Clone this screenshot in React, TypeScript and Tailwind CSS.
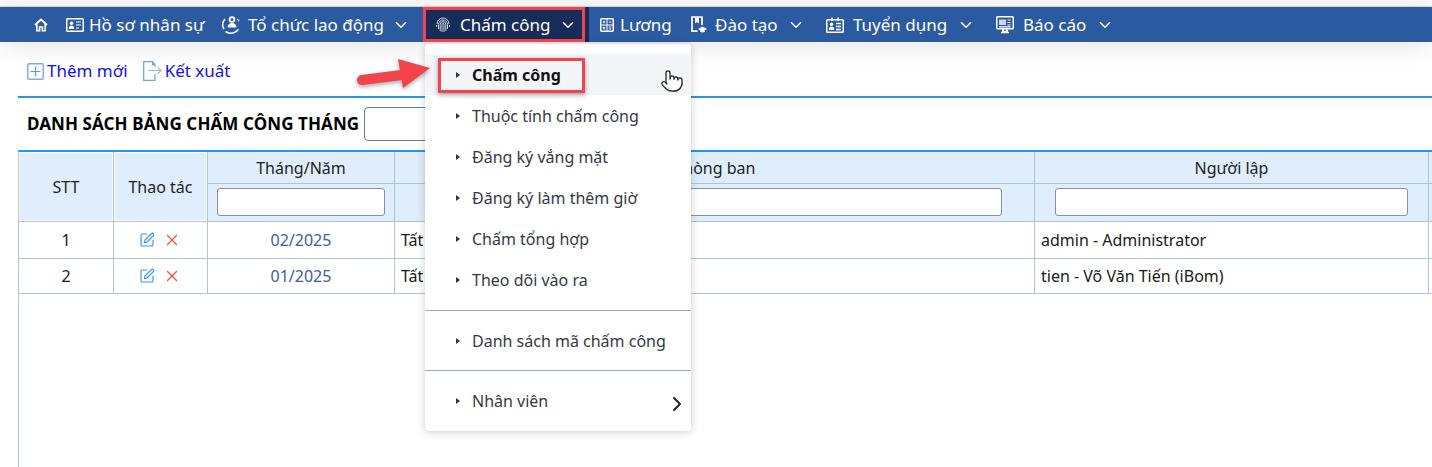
import React from "react";
import { ChevronDown, ChevronRight, Pointer, SquarePen, X } from "lucide-react";

const HomeIcon = () => (
  <svg width="16" height="16" viewBox="0 0 16 16" fill="none" stroke="#fff" strokeWidth="2">
    <path d="M2 8 8 2.5 14 8" strokeLinejoin="round" />
    <path d="M3.8 7v6.8h2.8V10h2.8v3.8h2.8V7" strokeWidth="1.6" />
  </svg>
);

const ProfileIcon = () => (
  <svg width="18" height="14" viewBox="0 0 18 14" fill="none" stroke="#fff">
    <rect x="0.75" y="0.75" width="16.5" height="12.5" rx="0.8" strokeWidth="1.5" />
    <circle cx="5.5" cy="5.3" r="1.8" fill="#fff" stroke="none" />
    <path d="M2.8 11c0-2.6 1.2-3.6 2.7-3.6S8.2 8.4 8.2 11z" fill="#fff" stroke="none" />
    <path d="M10 4h5M10 7h5M10 10h3" strokeWidth="1.2" />
  </svg>
);

const OrgIcon = () => (
  <svg width="20" height="20" viewBox="0 0 20 20" fill="none" stroke="#fff">
    <circle cx="11" cy="4.5" r="2.4" strokeWidth="1.8" />
    <path d="M6.5 12.5c0-3 2-4.5 4.5-4.5s4.5 1.5 4.5 4.5z" fill="#fff" stroke="none" />
    <path d="M4 4C1.500 7 1 11 3 14" strokeWidth="1.5" />
    <path d="M4.500 16.500c4 2.500 9 2 13-2" strokeWidth="1.5" />
    <path d="M16 4c.8.500 1.500 1.300 2 2.300" strokeWidth="1.3" />
  </svg>
);

const FingerprintIcon = () => (
  <svg width="16" height="16" viewBox="0 0 16 16" fill="none" stroke="#cfd4dd" strokeWidth="1">
    <path d="M2 7a6 6 0 0 1 12 0M1.500 10V8M14.500 10V8" />
    <path d="M3.500 12V7.500a4.500 4.500 0 0 1 9 0V12" />
    <path d="M5.200 14V7.500a2.800 2.800 0 0 1 5.600 0V14" />
    <path d="M7 15V7.500a1 1 0 0 1 2 0V15" />
  </svg>
);

const SalaryIcon = () => (
  <svg width="14" height="14" viewBox="0 0 14 14" fill="none" stroke="#fff">
    <rect x="0.75" y="0.75" width="12.5" height="12.5" rx="1" strokeWidth="1.5" />
    <path d="M1 7h12M7 1v12" strokeWidth="1" />
    <path d="M2.800 4h2.400M4 2.800v2.400M8.800 4h2.400M8.800 9h2.400M8.800 11h2.400M3 9l2 2M5 9l-2 2" strokeWidth="1.1" />
  </svg>
);

const TrainingIcon = () => (
  <svg width="17" height="18" viewBox="0 0 17 18" fill="none" stroke="#fff">
    <path d="M7.500 15.200H2V1h10v8" strokeWidth="1.7" />
    <path d="M5 1.500v6l2-1.500 2 1.500v-6z" fill="#fff" stroke="none" />
    <path d="M12.500 10.500 17 13l-4.500 2.500L8 13z" fill="#fff" stroke="none" />
    <path d="M10 15.500c1.500 1.300 3.500 1.300 5 0v-1.500l-2.500 1.500-2.500-1.500z" fill="#fff" stroke="none" />
  </svg>
);

const RecruitIcon = () => (
  <svg width="18" height="16" viewBox="0 0 18 16" fill="none" stroke="#fff">
    <rect x="0.75" y="2.75" width="16.5" height="12.5" rx="0.8" strokeWidth="1.5" />
    <path d="M6 .5V4M12 .5V4" strokeWidth="1.5" />
    <circle cx="5.5" cy="7.3" r="1.7" fill="#fff" stroke="none" />
    <path d="M2.800 13c0-2.500 1.200-3.400 2.700-3.400S8.200 10.500 8.200 13z" fill="#fff" stroke="none" />
    <path d="M10 6.500h5M10 9.500h5M10 12.500h5" strokeWidth="1.3" />
  </svg>
);

const ReportIcon = () => (
  <svg width="18" height="18" viewBox="0 0 18 18" fill="none" stroke="#fff">
    <rect x="0.75" y="0.75" width="16.5" height="12" rx="0.8" strokeWidth="1.5" />
    <path d="M3 3.500h7V9H3z" fill="#fff" fillOpacity="0.75" stroke="none" />
    <path d="M11.500 4h3M11.500 6.500h3M11.500 9h3M3 10.800h11.500" strokeWidth="1.2" />
    <path d="M7 13v2.500h4V13M5 16.500h8" strokeWidth="1.7" />
  </svg>
);

const PlusBoxIcon = () => (
  <svg width="17" height="17" viewBox="0 0 17 17" fill="none" stroke="#7fb3dd">
    <rect x="0.75" y="0.75" width="15.5" height="15.5" rx="1" strokeWidth="1.5" />
    <path d="M3.500 8.500h10M8.500 3.500v10" stroke="#5f9bd0" strokeWidth="1.2" />
  </svg>
);

const ExportIcon = () => (
  <svg width="19" height="20" viewBox="0 0 19 20" fill="none" stroke="#6fa6d6" strokeWidth="1.2">
    <path d="M12 6V3.500L9.500.7H.7v18.600H12V13" />
    <path d="M9.500.7v3H12" />
    <path d="M5 9.500h13M14.800 6.300l3.400 3.200-3.400 3.200" stroke="#8fbadd" />
  </svg>
);

interface NavItem {
  label: string;
  icon: React.ReactNode;
  hasMenu: boolean;
  className: string;
}

const NAV_ITEMS: NavItem[] = [
  { label: "Hồ sơ nhân sự", icon: <ProfileIcon />, hasMenu: false, className: "w-[137px] gap-[5px]" },
  { label: "Tổ chức lao động", icon: <OrgIcon />, hasMenu: true, className: "w-[221px] pl-[18px] gap-[7px]" },
];

const NAV_ITEMS_RIGHT: NavItem[] = [
  { label: "Lương", icon: <SalaryIcon />, hasMenu: false, className: "w-[90px] pl-[11px] gap-[6px]" },
  { label: "Đào tạo", icon: <TrainingIcon />, hasMenu: true, className: "w-[136px] pl-[11px] gap-[8px]" },
  { label: "Tuyển dụng", icon: <RecruitIcon />, hasMenu: true, className: "w-[170px] pl-[11px] gap-[9px]" },
  { label: "Báo cáo", icon: <ReportIcon />, hasMenu: true, className: "w-[130px] pl-[11px] gap-[9px]" },
];

const MENU_GROUPS = [
  { className: "", items: ["Chấm công", "Thuộc tính chấm công", "Đăng ký vắng mặt", "Đăng ký làm thêm giờ", "Chấm tổng hợp", "Theo dõi vào ra"] },
  { className: "mt-[10px] pt-[9px] border-t border-[#9aaac4]", items: ["Danh sách mã chấm công"] },
  { className: "mt-[9px] pt-[9px] border-t border-[#9aaac4]", items: ["Nhân viên"] },
];

const ROWS = [
  { id: 1, month: "02/2025", dept: "Tất cả", creator: "admin - Administrator", height: "h-[37px]" },
  { id: 2, month: "01/2025", dept: "Tất cả", creator: "tien - Võ Văn Tiến (iBom)", height: "h-[35px]" },
];

const headCell = "border-r border-b border-[#a9c4dc] bg-[#e0edfd] font-normal text-[#222]";
const bodyCell = "border-r border-b border-[#a9c4dc] text-[#1a1a1a]";
const filterCell = `${headCell} pb-[2px]`;
const filterInput = "block mx-auto w-[90%] h-[28px] bg-white border border-[#8d8d9c] rounded-[3px]";

const NavButton = ({ item }: { item: NavItem }) => (
  <div className={`flex items-center h-full shrink-0 whitespace-nowrap ${item.className}`}>
    <span className="shrink-0">{item.icon}</span>
    <span>{item.label}</span>
    {item.hasMenu && <ChevronDown size={18} strokeWidth={2} className="ml-[1px] shrink-0" />}
  </div>
);

const DropdownMenu = () => (
  <div className="absolute left-[425px] top-[44px] w-[266px] pt-[10px] pb-[10px] bg-white rounded-[4px] shadow-[0_1px_8px_rgba(0,0,0,0.2)] text-[#343944]">
    {MENU_GROUPS.map((group, g) => (
      <div key={g} className={group.className}>
        {group.items.map((label, i) => {
          const active = g === 0 && i === 0;
          return (
            <div
              key={label}
              className={`flex items-center h-[41px] pl-[31px] ${active ? "bg-[#f4f5f9] font-bold text-[#111]" : ""}`}
            >
              <span className="w-0 h-0 mr-[12px] border-y-[3.5px] border-y-transparent border-l-[4px] border-l-[#333]" />
              <span>{label}</span>
              {g === 2 && <ChevronRight size={24} strokeWidth={2} className="ml-auto mr-[2px] mt-[7px] text-[#222]" />}
            </div>
          );
        })}
      </div>
    ))}
  </div>
);

export default function App() {
  return (
    <div className="relative w-[1432px] h-[467px] overflow-hidden bg-white text-[16px] font-['Noto_Sans',sans-serif]">
      <div className="h-[7px] bg-[#f9f9f9] border-b border-[#d8d8d8]" />
      <nav className="relative flex items-center h-[35px] bg-[#2c5aa0] text-white text-[17px] shadow-[0_4px_24px_rgba(0,0,0,0.1)]">
        <div className="w-[66px] pl-[33px] shrink-0">
          <HomeIcon />
        </div>
        {NAV_ITEMS.map((item) => (
          <NavButton key={item.label} item={item} />
        ))}
        <div className="flex items-center w-[165px] h-full pl-[11px] shrink-0 whitespace-nowrap bg-[#172c58]">
          <FingerprintIcon />
          <span className="ml-[9px]">Chấm công</span>
          <ChevronDown size={18} strokeWidth={2} className="ml-[8px] shrink-0" />
        </div>
        {NAV_ITEMS_RIGHT.map((item) => (
          <NavButton key={item.label} item={item} />
        ))}
      </nav>

      <div className="flex items-center h-[54px] pt-[4px] pl-[27px] text-[17px] text-[#1212e6]">
        <PlusBoxIcon />
        <span className="ml-[3px]">Thêm mới</span>
        <span className="ml-[15px]">
          <ExportIcon />
        </span>
        <span className="ml-[3px]">Kết xuất</span>
      </div>

      <div className="ml-[18px] border-t-2 border-[#2196f3]">
        <div className="flex items-center gap-[5px] h-[52px] pl-[9px]">
          <h1 className="font-bold text-[17px] tracking-[0.1px] text-black whitespace-nowrap">DANH SÁCH BẢNG CHẤM CÔNG THÁNG</h1>
          <div className="w-[90px] h-[34px] border border-[#5b7bb0] rounded-[4px]" />
        </div>
      </div>

      <div className="ml-[18px] h-[317px] border-l border-t-2 border-l-[#a9c4dc] border-t-[#2196f3] overflow-hidden">
        <table className="table-fixed w-[1500px] border-separate border-spacing-0">
          <colgroup>
            <col className="w-[95px]" />
            <col className="w-[94px]" />
            <col className="w-[187px]" />
            <col className="w-[640px]" />
            <col className="w-[394px]" />
            <col />
          </colgroup>
          <thead>
            <tr className="h-[32px]">
              <th rowSpan={2} className={`${headCell} shadow-[inset_0_0_0_1px_#fff]`}>STT</th>
              <th rowSpan={2} className={`${headCell} shadow-[inset_0_0_0_1px_#fff]`}>Thao tác</th>
              <th className={headCell}>Tháng/Năm</th>
              <th className={headCell}>Phòng ban</th>
              <th className={headCell}>Người lập</th>
              <th className={headCell} />
            </tr>
            <tr className="h-[38px]">
              <th className={filterCell}><input className={filterInput} /></th>
              <th className={filterCell}><input className={filterInput} /></th>
              <th className={filterCell}><input className={filterInput} /></th>
              <th className={headCell} />
            </tr>
          </thead>
          <tbody>
            {ROWS.map((row) => (
              <tr key={row.id} className={row.height}>
                <td className={`${bodyCell} text-center`}>{row.id}</td>
                <td className={bodyCell}>
                  <div className="flex items-center justify-center gap-[8px] -translate-x-px">
                    <SquarePen size={16} strokeWidth={1.8} className="text-[#3b9cf0]" />
                    <X size={18} strokeWidth={1.6} className="text-[#f0503c]" />
                  </div>
                </td>
                <td className={`${bodyCell} text-center text-[#3b5e9e]`}>{row.month}</td>
                <td className={`${bodyCell} pl-[6px]`}>{row.dept}</td>
                <td className={`${bodyCell} pl-[6px]`}>{row.creator}</td>
                <td className={bodyCell} />
              </tr>
            ))}
          </tbody>
        </table>
      </div>

      <DropdownMenu />

      {/* annotations drawn on top of the screenshot */}
      <div className="absolute left-[423px] top-[7px] w-[162px] h-[35px] border-[3px] border-[#f2444a]" />
      <div className="absolute left-[438px] top-[58px] w-[147px] h-[35px] border-[3px] border-[#f2444a] shadow-[0_2px_5px_rgba(0,0,0,0.35)]" />
      <svg
        className="absolute left-[355px] top-[56px] drop-shadow-[0_2px_2px_rgba(0,0,0,0.35)]"
        width="80"
        height="40"
        viewBox="0 0 80 40"
      >
        <path d="M7 24 46 19" stroke="#f2444a" strokeWidth="10" strokeLinecap="round" />
        <path d="M43 3 75 12 48 32z" fill="#f2444a" />
      </svg>
      <Pointer size={24} strokeWidth={1.4} fill="#fff" className="absolute left-[660px] top-[69px] text-[#333]" />
    </div>
  );
}
